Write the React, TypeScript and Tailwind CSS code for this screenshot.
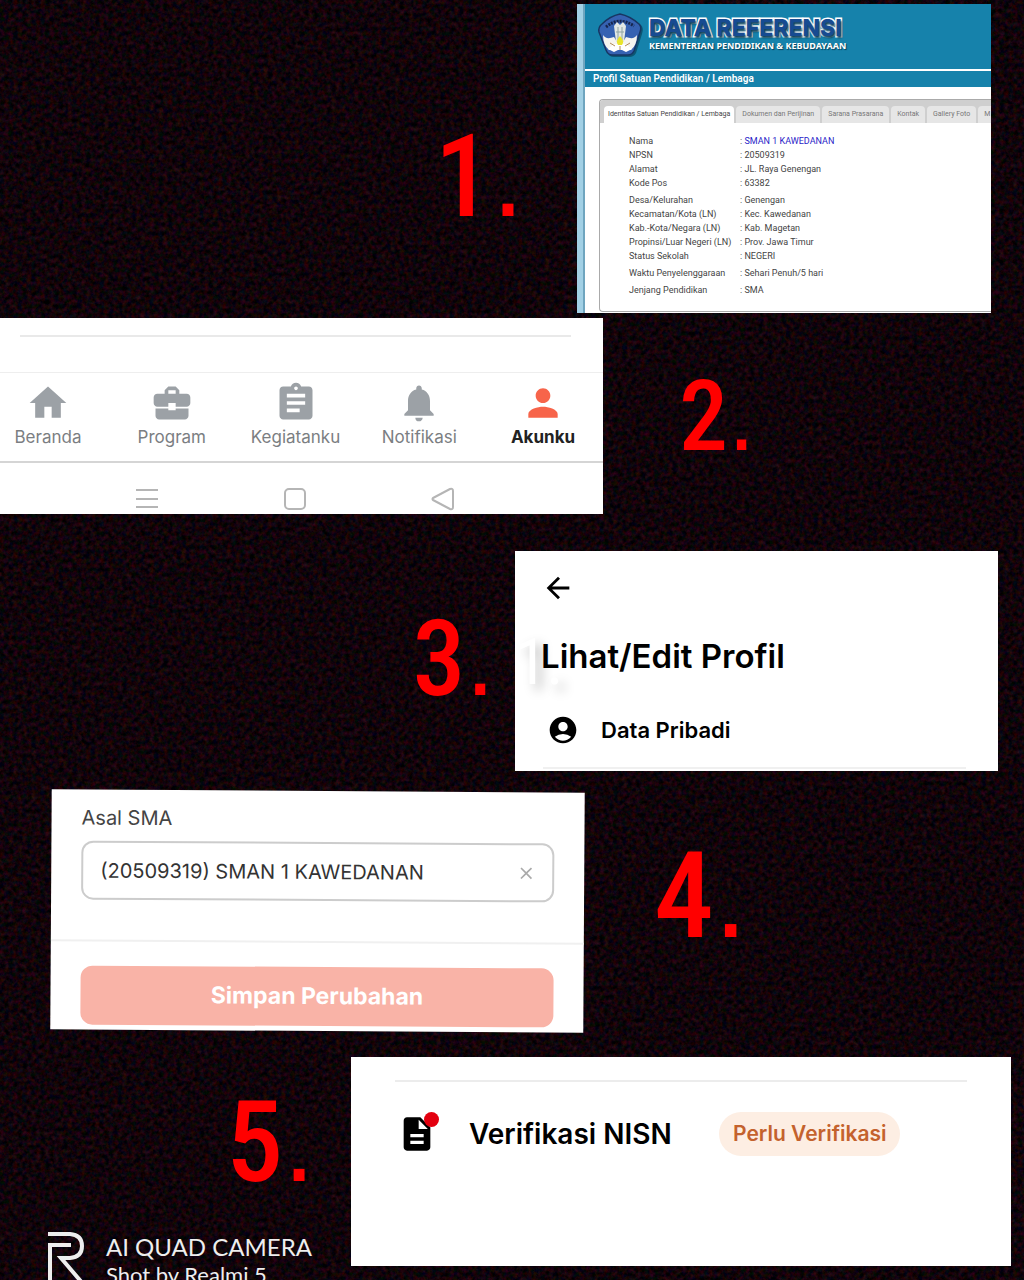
import React from "react";
import {
  MdHome,
  MdBusinessCenter,
  MdAssignment,
  MdNotifications,
  MdPerson,
  MdArrowBack,
  MdAccountCircle,
  MdDescription,
  MdClose,
} from "react-icons/md";

const tabs = ["Dokumen dan Perijinan", "Sarana Prasarana", "Kontak", "Gallery Foto", "M"];

const rows = [
  { label: "Nama", value: "SMAN 1 KAWEDANAN", link: true },
  { label: "NPSN", value: "20509319" },
  { label: "Alamat", value: "JL. Raya Genengan" },
  { label: "Kode Pos", value: "63382" },
  { label: "Desa/Kelurahan", value: "Genengan", gap: true },
  { label: "Kecamatan/Kota (LN)", value: "Kec. Kawedanan" },
  { label: "Kab.-Kota/Negara (LN)", value: "Kab. Magetan" },
  { label: "Propinsi/Luar Negeri (LN)", value: "Prov. Jawa Timur" },
  { label: "Status Sekolah", value: "NEGERI" },
  { label: "Waktu Penyelenggaraan", value: "Sehari Penuh/5 hari", gap: true },
  { label: "Jenjang Pendidikan", value: "SMA", gap: true },
];

const nav = [
  { label: "Beranda", Icon: MdHome },
  { label: "Program", Icon: MdBusinessCenter },
  { label: "Kegiatanku", Icon: MdAssignment },
  { label: "Notifikasi", Icon: MdNotifications },
  { label: "Akunku", Icon: MdPerson, active: true },
];

function Grain() {
  return (
    <svg className="pointer-events-none absolute inset-0 h-full w-full" aria-hidden="true">
      <filter id="grain" colorInterpolationFilters="sRGB">
        <feTurbulence type="fractalNoise" baseFrequency="0.22" numOctaves="4" seed="4" />
        <feColorMatrix values="0.36 0 0 0 -0.115  0 0.14 0 0 -0.055  0 0 0.2 0 -0.06  0 0 0 0 1" />
      </filter>
      <rect width="100%" height="100%" filter="url(#grain)" />
    </svg>
  );
}

function Crest() {
  return (
    <svg viewBox="0 0 48 48" className="h-12 w-12 shrink-0" aria-hidden="true">
      <path d="M25 4Q34 6 44 13Q47 16 45 22L39 41Q37 45 32 45H17Q12 45 10 40L4 21Q3 16 7 13Q16 6 25 4Z" fill="#06384f" opacity=".6" />
      <path d="M23 2Q33 4 42 12Q45 15 43 20L37 39Q35 43 31 43H15Q11 43 9 38L2 20Q1 15 5 12Q13 4 23 2Z" fill="#3662b2" stroke="#173663" strokeWidth="1.5" />
      <path d="M9 15Q22 4 37 14" fill="none" stroke="#17264d" strokeWidth="3" strokeDasharray="2 1" />
      <path d="M6 23Q9 28 17 25L20 30H26L29 25Q37 28 40 23Q40 33 34 38H12Q6 33 6 23Z" fill="#f6f4ef" />
      <path d="M11 37L17 32H29L35 37L29 40L23 37L17 40Z" fill="#fff" />
      <path d="M17 14L20 10L23 13L26 10L29 14L27 30H19Z" fill="#e3e8e4" />
      <path d="M21 15V28M25 15V28M19 20H27" stroke="#8fa5a4" strokeWidth="1" />
      <path d="M23 24Q28 29 25 33H21Q18 29 23 24Z" fill="#e9e52b" />
      <path d="M13 31L18 34M33 31L28 34M23 34V38" stroke="#b08a58" strokeWidth="1" />
    </svg>
  );
}

function Step({ n, className }: { n: number; className: string }) {
  return (
    <h2 className={"leading-none font-medium whitespace-nowrap text-[#ff0000] " + className}>
      {n}
      <span className="font-['Liberation_Sans'] font-normal">.</span>
    </h2>
  );
}

function ReferenceCard() {
  return (
    <section className="flex min-w-0 overflow-hidden bg-white">
      <div className="w-2 shrink-0 border-r-2 border-[#6fa5bf] bg-[#a2d0e5]" />
      <div className="min-w-0 flex-1">
        <header className="flex h-[65px] items-start gap-1 bg-[#1682ab] pt-2 pl-3">
          <Crest />
          <div className="pt-1 whitespace-nowrap">
            <h1 className="font-['Inter'] text-[23px] leading-6 font-extrabold text-[#174b91] [-webkit-text-stroke:3px_white] [paint-order:stroke_fill] [text-shadow:1px_2px_2px_#0b4059]">
              DATA REFERENSI
            </h1>
            <p className="font-['Noto_Sans'] text-[9px] leading-3 font-bold text-white [text-shadow:1px_1px_1px_#0b4059]">
              KEMENTERIAN PENDIDIKAN &amp; KEBUDAYAAN
            </p>
          </div>
        </header>
        <h2 className="mt-[2px] h-4 bg-[#1682ab] pl-2 font-['Roboto'] text-[10px] leading-4 font-semibold text-white">
          Profil Satuan Pendidikan / Lembaga
        </h2>
        <div className="mt-3 ml-3.5 h-[213px] overflow-hidden rounded-l border border-r-0 border-[#aaa] font-['Roboto']">
          <div className="flex h-[23px] items-end gap-[2px] bg-[#cfcfcf] pl-1 text-[7px] whitespace-nowrap text-[#777]">
            <button className="h-[17px] shrink-0 rounded-t-sm bg-white px-1 text-[#444]">
              Identitas Satuan Pendidikan / Lembaga
            </button>
            {tabs.map((t) => (
              <button key={t} className="h-[17px] shrink-0 rounded-t-sm bg-[#e6e6e6] px-[6px]">
                {t}
              </button>
            ))}
          </div>
          <table className="mt-[11px] ml-[29px] border-collapse text-[9px] leading-[14px] whitespace-nowrap text-[#444]">
            <tbody>
              {rows.map((r) => (
                <tr key={r.label}>
                  <th scope="row" className={"w-[111px] p-0 text-left font-normal " + (r.gap ? "pt-[3px]" : "")}>
                    {r.label}
                  </th>
                  <td className={"p-0 " + (r.gap ? "pt-[3px]" : "")}>
                    :{" "}
                    {r.link ? (
                      <a href="#sekolah" className="text-[#2a24c8]">
                        {r.value}
                      </a>
                    ) : (
                      r.value
                    )}
                  </td>
                </tr>
              ))}
            </tbody>
          </table>
        </div>
      </div>
    </section>
  );
}

function NavCard() {
  return (
    <section className="min-w-0 overflow-hidden bg-white">
      <hr className="mt-[17px] mr-8 ml-5 border-t-2 border-[#e9e9e9]" />
      <nav className="mt-[35px] flex h-[91px] justify-between border-t border-b-2 border-t-[#eee] border-b-[#d5d5d5] pt-2 pr-3">
        {nav.map(({ label, Icon, active }) => (
          <button
            key={label}
            className={
              "flex w-24 flex-col items-center font-['Inter'] text-[17px] leading-6 " +
              (active ? "font-bold text-[#222]" : "text-[#7b7e82]")
            }
          >
            <Icon className={active ? "h-11 w-11 text-[#f7644a]" : "h-11 w-11 text-[#9ca1a6]"} />
            <span>{label}</span>
          </button>
        ))}
      </nav>
      <div className="flex justify-center gap-[124px] pt-6 pr-[14px]">
        {["menu", "home", "back"].map((k) => (
          <button key={k} aria-label={k}>
            <svg viewBox="0 0 24 24" className="h-6 w-6" fill="none" stroke="#b5b5b5" strokeWidth="2" strokeLinejoin="round">
              {k === "menu" && <path d="M1 3H23M1 12H23M1 20H23" />}
              {k === "home" && <rect x="2" y="2" width="20" height="20" rx="4" />}
              {k === "back" && <path d="M2 11Q1 12 2 13L19 22Q22 23 22 20V4Q22 1 19 2Z" />}
            </svg>
          </button>
        ))}
      </div>
    </section>
  );
}

function ProfileCard() {
  return (
    <section className="relative min-w-0 overflow-hidden bg-white pt-5 pl-[26px] font-['Inter'] text-black">
      <span className="absolute top-[80px] left-0 font-['Roboto_Condensed','Roboto',sans-serif] text-[64px] leading-none text-white [text-shadow:6px_6px_12px_#0004]">
        1.
      </span>
      <button aria-label="Kembali" className="block">
        <MdArrowBack className="h-[34px] w-[34px]" />
      </button>
      <h2 className="relative mt-[31px] text-[33px] leading-10 font-semibold whitespace-nowrap">Lihat/Edit Profil</h2>
      <a href="#data" className="mt-[38px] mr-8 ml-[2px] flex h-[55px] gap-[22px] border-b-2 border-[#f0f0f0] pl-1 text-[22px] leading-8 font-semibold">
        <MdAccountCircle className="h-8 w-8" />
        <span>Data Pribadi</span>
      </a>
    </section>
  );
}

function SchoolForm() {
  return (
    <form className="min-w-0 rotate-[0.35deg] overflow-hidden bg-white font-['Inter']">
      <div className="px-[30px] pt-4">
        <label htmlFor="sma" className="block text-xl leading-6 text-[#444]">
          Asal SMA
        </label>
        <div className="mt-[11px] flex h-[59px] items-center rounded-xl border-2 border-[#ccc] pr-4 pl-[17px]">
          <input id="sma" defaultValue="(20509319) SMAN 1 KAWEDANAN" className="min-w-0 flex-1 text-xl text-[#333] outline-none" />
          <button type="button" aria-label="Hapus">
            <MdClose className="h-5 w-5 text-[#aaa]" />
          </button>
        </div>
      </div>
      <div className="mt-10 border-t-2 border-[#f0f0f0] px-[30px] pt-6">
        <button type="button" className="h-[59px] w-full rounded-xl bg-[#f9b3a7] text-[23px] font-bold text-white">
          Simpan Perubahan
        </button>
      </div>
    </form>
  );
}

function VerifyCard() {
  return (
    <section className="h-[209px] min-w-0 overflow-hidden bg-white font-['Inter']">
      <hr className="mt-[23px] mr-11 ml-11 border-t-2 border-[#ececec]" />
      <div className="mt-[30px] flex h-11 items-center pl-[46px] whitespace-nowrap">
        <span className="relative shrink-0">
          <MdDescription className="h-10 w-10 text-black" />
          <span className="absolute -top-0.5 -right-0.5 h-[15px] w-[15px] rounded-full bg-[#e3000f]" />
        </span>
        <h2 className="ml-8 w-[250px] text-[28px] font-semibold text-black">Verifikasi NISN</h2>
        <a href="#verifikasi" className="rounded-full bg-[#fdeee3] px-[14px] text-[21px] leading-[44px] font-semibold text-[#c4622d]">
          Perlu Verifikasi
        </a>
      </div>
    </section>
  );
}

export default function App() {
  return (
    <main className="relative h-screen overflow-hidden bg-[#0d0407]">
      <Grain />
      <div className="relative flex flex-col pt-1 font-['Roboto_Condensed','Roboto',sans-serif]">
        <div className="grid h-[309px] grid-cols-[577fr_414fr_33fr]">
          <Step n={1} className="pt-[115px] pr-[53px] text-right text-[115px]" />
          <ReferenceCard />
        </div>
        <div className="mt-[5px] grid h-[196px] grid-cols-[603fr_421fr]">
          <NavCard />
          <Step n={2} className="pt-[49px] pl-[76px] text-[98px]" />
        </div>
        <div className="mt-[37px] grid h-[220px] grid-cols-[515fr_483fr_26fr]">
          <Step n={3} className="pt-[54px] pr-5 text-right text-[106px]" />
          <ProfileCard />
        </div>
        <div className="mt-5 grid h-[240px] grid-cols-[51fr_533fr_440fr]">
          <span />
          <SchoolForm />
          <Step n={4} className="pt-11 pl-[70px] text-[120px]" />
        </div>
        <div className="mt-[26px] grid grid-cols-[351fr_660fr_13fr]">
          <div>
            <Step n={5} className="pt-7 pr-9 text-right text-[114px]" />
            <footer className="mt-8 flex gap-5 pl-[46px] whitespace-nowrap text-[#eee]">
              <svg viewBox="0 0 40 60" className="h-[60px] w-10 shrink-0" fill="none" stroke="currentColor" strokeWidth="4" aria-hidden="true">
                <path d="M2 3H24Q36 4 36 15Q36 26 24 27H15L38 54" />
                <path d="M25 14H4V60" />
              </svg>
              <div className="font-['Lato']">
                <p className="text-2xl leading-8">AI QUAD CAMERA</p>
                <p className="text-[22px] leading-6">Shot by Realmi 5</p>
              </div>
            </footer>
          </div>
          <VerifyCard />
        </div>
      </div>
    </main>
  );
}
